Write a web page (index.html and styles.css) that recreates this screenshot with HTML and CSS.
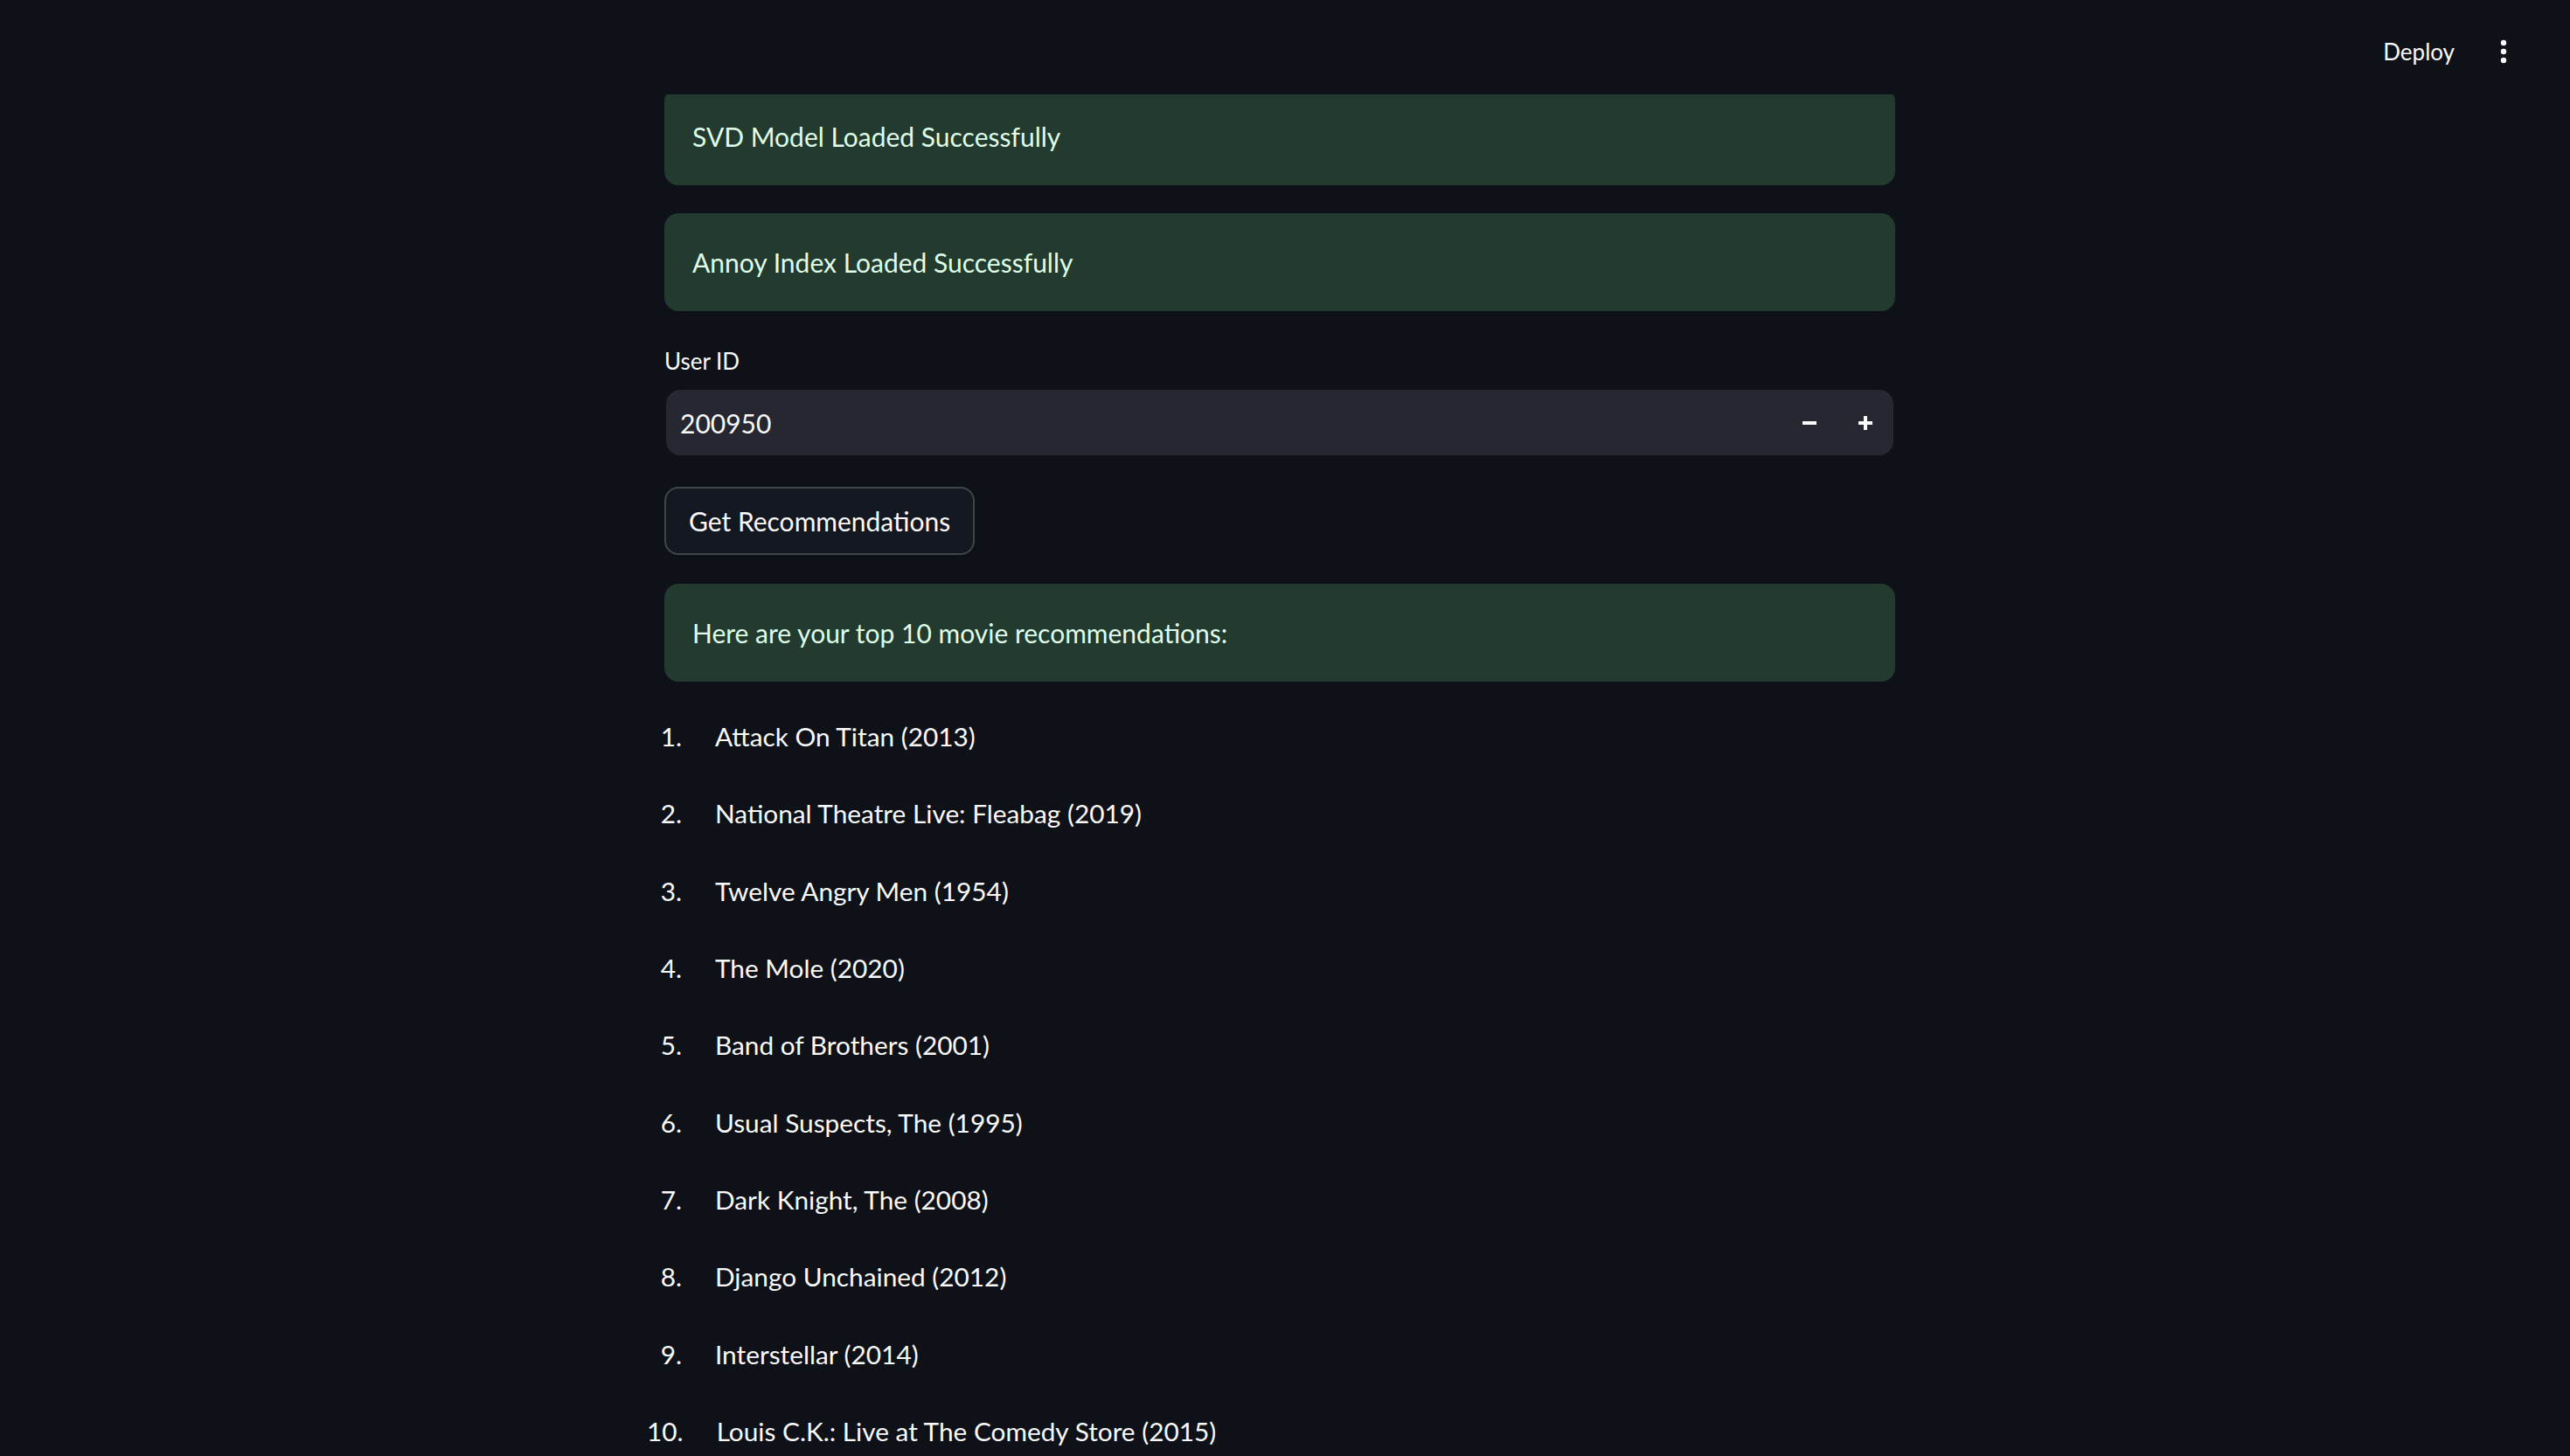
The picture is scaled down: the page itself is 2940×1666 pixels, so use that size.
FILE: index.html
```html
<!DOCTYPE html>
<html lang="en">
<head>
<meta charset="utf-8">
<title>Movie Recommender</title>
<link rel="stylesheet" href="styles.css">
</head>
<body>
<header class="topbar">
  <span class="deploy">Deploy</span>
  <span class="kebab" aria-label="Main menu">
    <svg width="8" height="28" viewBox="0 0 8 28"><circle cx="4" cy="4" r="3.2" fill="#fafafa"/><circle cx="4" cy="14" r="3.2" fill="#fafafa"/><circle cx="4" cy="24" r="3.2" fill="#fafafa"/></svg>
  </span>
</header>
<main class="viewport">
  <div class="block">
    <div class="alert alert-first">SVD Model Loaded Successfully</div>
    <div class="alert">Annoy Index Loaded Successfully</div>
    <div class="field">
      <label class="field-label">User ID</label>
      <div class="number-input">
        <span class="number-value">200950</span>
        <span class="step">
          <svg width="16" height="16" viewBox="0 0 16 16"><rect x="0" y="6" width="16" height="4" fill="#fafafa"/></svg>
        </span>
        <span class="step">
          <svg width="16" height="16" viewBox="0 0 16 16"><rect x="0" y="6" width="16" height="4" fill="#fafafa"/><rect x="6" y="0" width="4" height="16" fill="#fafafa"/></svg>
        </span>
      </div>
    </div>
    <div class="button-row"><button class="btn">Get Recommendations</button></div>
    <div class="alert">Here are your top 10 movie recommendations:</div>
    <ol class="recs">
      <li>Attack On Titan (2013)</li>
      <li>National Theatre Live: Fleabag (2019)</li>
      <li>Twelve Angry Men (1954)</li>
      <li>The Mole (2020)</li>
      <li>Band of Brothers (2001)</li>
      <li>Usual Suspects, The (1995)</li>
      <li>Dark Knight, The (2008)</li>
      <li>Django Unchained (2012)</li>
      <li>Interstellar (2014)</li>
      <li>Louis C.K.: Live at The Comedy Store (2015)</li>
    </ol>
  </div>
</main>
</body>
</html>
```
FILE: styles.css
```css
html, body {
  margin: 0;
  padding: 0;
  background: #0e1117;
  color: #fafafa;
  font-family: "Lato", "Liberation Sans", sans-serif;
  height: 100%;
  overflow: hidden;
}

.topbar {
  height: 108px;
  display: flex;
  align-items: center;
  justify-content: flex-end;
  padding-right: 72px;
  box-sizing: border-box;
  background: #0e1117;
  position: relative;
  z-index: 2;
}

.deploy {
  font-size: 26px;
  color: #fafafa;
  margin-right: 52px;
  margin-top: 10px;
}

.kebab {
  display: flex;
  align-items: center;
  margin-top: 10px;
}

.viewport {
  height: calc(100% - 108px);
  overflow: hidden;
  display: flex;
  justify-content: center;
  padding-right: 12px;
}

.block {
  width: 1408px;
  margin-top: -8px;
  display: flex;
  flex-direction: column;
}

.alert {
  background: #233a2e;
  color: #dffde9;
  border-radius: 16px;
  padding: 32px 32px;
  font-size: 30px;
  line-height: 48px;
  margin-bottom: 32px;
}

.alert-first {
  margin-bottom: 32px;
}

.field {
  display: flex;
  flex-direction: column;
}

.field-label {
  font-size: 26px;
  line-height: 50px;
  height: 50px;
  margin-bottom: 8px;
  color: #fafafa;
}

.number-input {
  height: 75px;
  margin: 0 2px;
  background: #262730;
  border-radius: 16px;
  display: flex;
  align-items: center;
  padding-left: 16px;
  padding-right: 0;
  box-sizing: border-box;
}

.number-value {
  flex: 1;
  font-size: 30px;
  color: #fafafa;
}

.step {
  width: 64px;
  height: 75px;
  display: flex;
  align-items: center;
  justify-content: center;
}

.button-row {
  margin-top: 36px;
  margin-bottom: 33px;
}

.btn {
  height: 78px;
  padding: 0 26px;
  background: #131720;
  color: #fafafa;
  border: 2px solid rgba(250, 250, 250, 0.2);
  border-radius: 16px;
  font-family: "Lato", "Liberation Sans", sans-serif;
  font-size: 30px;
  line-height: 1;
  display: flex;
  align-items: center;
}

.recs {
  list-style: none;
  counter-reset: item;
  margin: 5px 0 0 0;
  padding: 0;
}

.recs li {
  counter-increment: item;
  display: flex;
  font-size: 29.8px;
  line-height: 51.2px;
  margin-bottom: 37.13px;
  color: #fafafa;
}

.recs li::before {
  content: counter(item) ".";
  flex: 0 0 40px;
  margin-left: -20px;
  margin-right: 38px;
  text-align: right;
}
```
